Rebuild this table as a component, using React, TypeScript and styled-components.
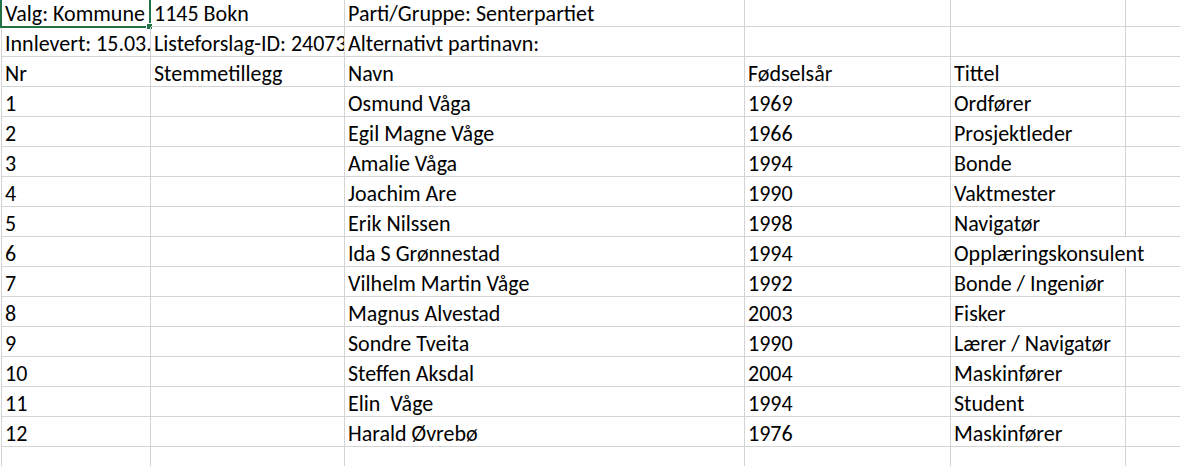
import React from "react";
import styled, { createGlobalStyle } from "styled-components";

const Global = createGlobalStyle`
  html, body { margin: 0; padding: 0; background: #ffffff; }
  body { font-family: Calibri, Carlito, Lato, "Liberation Sans", sans-serif; overflow: hidden; height: 466px; }
`;

const Sheet = styled.div`
  display: grid;
  grid-template-columns: 149px 194px 400px 206px 175px 1fr;
  margin-left: 1px;
  border-left: 1px solid #d4d4d4;
  width: 1179px;
  align-content: start;
`;

const CellBox = styled.div<{ $first?: boolean; $spill?: boolean }>`
  position: relative;
  box-sizing: border-box;
  height: ${(p) => (p.$first ? "27px" : "30px")};
  border-right: 1px solid ${(p) => (p.$spill ? "transparent" : "#d4d4d4")};
  border-bottom: 1px solid #d4d4d4;
  padding: 0 0 0 3px;
  display: flex;
  align-items: flex-end;
  min-width: 0;
  z-index: ${(p) => (p.$spill ? 1 : 0)};
`;

const CellText = styled.span<{ $spill?: boolean }>`
  flex: 1;
  min-width: 0;
  margin-bottom: -2px;
  font-size: 22px;
  line-height: 28px;
  color: #000;
  white-space: nowrap;
  overflow-x: ${(p) => (p.$spill ? "visible" : "clip")};
  overflow-y: visible;
`;

const Selection = styled.div`
  position: absolute;
  left: -2px;
  top: -3px;
  right: -1px;
  bottom: -2px;
  border: 2px solid #217346;
  pointer-events: none;
  z-index: 2;
`;

const Handle = styled.div`
  position: absolute;
  right: -4px;
  bottom: -4px;
  width: 5px;
  height: 5px;
  background: #217346;
  border: 1px solid #ffffff;
`;

type CellProps = {
  children?: React.ReactNode;
  first?: boolean;
  spill?: boolean;
  selected?: boolean;
};

function Cell({ children, first, spill, selected }: CellProps) {
  return (
    <CellBox $first={first} $spill={spill}>
      <CellText $spill={spill}>{children}</CellText>
      {selected && (
        <Selection>
          <Handle />
        </Selection>
      )}
    </CellBox>
  );
}

type Row = { nr: string; navn: string; aar: string; tittel: string; spill?: boolean };

const rows: Row[] = [
  { nr: "1", navn: "Osmund Våga", aar: "1969", tittel: "Ordfører" },
  { nr: "2", navn: "Egil Magne Våge", aar: "1966", tittel: "Prosjektleder" },
  { nr: "3", navn: "Amalie Våga", aar: "1994", tittel: "Bonde" },
  { nr: "4", navn: "Joachim Are", aar: "1990", tittel: "Vaktmester" },
  { nr: "5", navn: "Erik Nilssen", aar: "1998", tittel: "Navigatør" },
  { nr: "6", navn: "Ida S Grønnestad", aar: "1994", tittel: "Opplæringskonsulent", spill: true },
  { nr: "7", navn: "Vilhelm Martin Våge", aar: "1992", tittel: "Bonde / Ingeniør" },
  { nr: "8", navn: "Magnus Alvestad", aar: "2003", tittel: "Fisker" },
  { nr: "9", navn: "Sondre Tveita", aar: "1990", tittel: "Lærer / Navigatør" },
  { nr: "10", navn: "Steffen Aksdal", aar: "2004", tittel: "Maskinfører" },
  { nr: "11", navn: "Elin\u00a0 Våge", aar: "1994", tittel: "Student" },
  { nr: "12", navn: "Harald Øvrebø", aar: "1976", tittel: "Maskinfører" },
];

export default function App() {
  return (
    <>
      <Global />
      <Sheet>
        <Cell first selected>Valg: Kommune</Cell>
        <Cell first>1145 Bokn</Cell>
        <Cell first>Parti/Gruppe: Senterpartiet</Cell>
        <Cell first />
        <Cell first />
        <Cell first />

        <Cell>Innlevert: 15.03.2023</Cell>
        <Cell>Listeforslag-ID: 240731</Cell>
        <Cell>Alternativt partinavn:</Cell>
        <Cell />
        <Cell />
        <Cell />

        <Cell>Nr</Cell>
        <Cell>Stemmetillegg</Cell>
        <Cell>Navn</Cell>
        <Cell>Fødselsår</Cell>
        <Cell>Tittel</Cell>
        <Cell />

        {rows.map((r) => (
          <React.Fragment key={r.nr}>
            <Cell>{r.nr}</Cell>
            <Cell />
            <Cell>{r.navn}</Cell>
            <Cell>{r.aar}</Cell>
            <Cell spill={r.spill}>{r.tittel}</Cell>
            <Cell />
          </React.Fragment>
        ))}

        <Cell />
        <Cell />
        <Cell />
        <Cell />
        <Cell />
        <Cell />
      </Sheet>
    </>
  );
}
